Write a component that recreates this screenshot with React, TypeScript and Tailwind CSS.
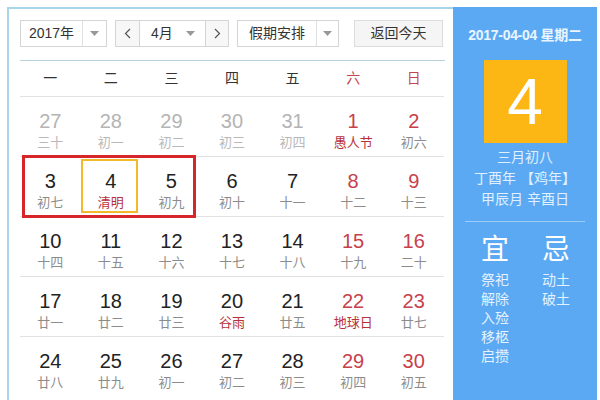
import React from 'react';

type Day = {
  n: number;
  lunar: string;
  muted?: boolean;
  red?: boolean;
  fest?: boolean;
};

const weeks: Day[][] = [
  [
    { n: 27, lunar: '三十', muted: true },
    { n: 28, lunar: '初一', muted: true },
    { n: 29, lunar: '初二', muted: true },
    { n: 30, lunar: '初三', muted: true },
    { n: 31, lunar: '初四', muted: true },
    { n: 1, lunar: '愚人节', red: true, fest: true },
    { n: 2, lunar: '初六', red: true },
  ],
  [
    { n: 3, lunar: '初七' },
    { n: 4, lunar: '清明', fest: true },
    { n: 5, lunar: '初九' },
    { n: 6, lunar: '初十' },
    { n: 7, lunar: '十一' },
    { n: 8, lunar: '十二', red: true },
    { n: 9, lunar: '十三', red: true },
  ],
  [
    { n: 10, lunar: '十四' },
    { n: 11, lunar: '十五' },
    { n: 12, lunar: '十六' },
    { n: 13, lunar: '十七' },
    { n: 14, lunar: '十八' },
    { n: 15, lunar: '十九', red: true },
    { n: 16, lunar: '二十', red: true },
  ],
  [
    { n: 17, lunar: '廿一' },
    { n: 18, lunar: '廿二' },
    { n: 19, lunar: '廿三' },
    { n: 20, lunar: '谷雨', fest: true },
    { n: 21, lunar: '廿五' },
    { n: 22, lunar: '地球日', red: true, fest: true },
    { n: 23, lunar: '廿七', red: true },
  ],
  [
    { n: 24, lunar: '廿八' },
    { n: 25, lunar: '廿九' },
    { n: 26, lunar: '初一' },
    { n: 27, lunar: '初二' },
    { n: 28, lunar: '初三' },
    { n: 29, lunar: '初四', red: true },
    { n: 30, lunar: '初五', red: true },
  ],
];

const weekdays = ['一', '二', '三', '四', '五', '六', '日'];

function Caret() {
  return (
    <svg width="9" height="5" viewBox="0 0 9 5">
      <path d="M0 0h9L4.5 5z" fill="#999" />
    </svg>
  );
}

function Chevron({ dir }: { dir: 'left' | 'right' }) {
  return (
    <svg width="7" height="11" viewBox="0 0 7 11">
      <path
        d={dir === 'left' ? 'M6 1L1.5 5.5 6 10' : 'M1 1l4.5 4.5L1 10'}
        fill="none"
        stroke="#555"
        strokeWidth="1.2"
      />
    </svg>
  );
}

function Cell({ d }: { d: Day }) {
  const num = d.muted ? 'text-[#b4b4b4]' : d.red ? 'text-[#c7414b]' : 'text-[#222]';
  const lunar = d.fest
    ? 'text-[#b8303a]'
    : d.muted
      ? 'text-[#b8b8b8]'
      : 'text-[#8c8c8c]';
  return (
    <div className="h-[60px] flex flex-col items-center pt-[13px] border-t border-[#e2e2e2]">
      <div className={`text-[20px] leading-[22px] ${num}`}>{d.n}</div>
      <div className={`text-[13px] leading-[16px] mt-[3px] ${lunar}`}>{d.lunar}</div>
    </div>
  );
}

export default function App() {
  return (
    <div
      className="w-[600px] h-[400px] bg-white overflow-hidden flex pt-[7px] pl-[7px]"
      style={{ fontFamily: '"Liberation Sans", "Noto Sans CJK SC", sans-serif' }}
    >
      <div className="w-[446px] h-[393px] border-l-2 border-t-2 border-[#a9d5ec] pl-[11px] pt-[11px]">
        {/* controls */}
        <div className="flex items-center h-[27px] text-[14px] text-[#333]">
          <div className="w-[87px] h-[27px] border border-[#d5d5d5] flex">
            <div className="w-[61px] flex items-center justify-center">2017年</div>
            <div className="flex-1 border-l border-[#e0e0e0] flex items-center justify-center">
              <Caret />
            </div>
          </div>
          <div className="ml-[8px] w-[114px] h-[27px] border border-[#d5d5d5] flex">
            <div className="w-[24px] bg-[#f7f7f7] flex items-center justify-center border-r border-[#d5d5d5]">
              <Chevron dir="left" />
            </div>
            <div className="flex-1 flex items-center pl-[11px] pr-[10px] justify-between">
              <span>4月</span>
              <Caret />
            </div>
            <div className="w-[23px] bg-[#f7f7f7] flex items-center justify-center border-l border-[#d5d5d5]">
              <Chevron dir="right" />
            </div>
          </div>
          <div className="ml-[8px] w-[102px] h-[27px] border border-[#d5d5d5] flex">
            <div className="w-[78px] flex items-center justify-center">假期安排</div>
            <div className="flex-1 border-l border-[#e0e0e0] flex items-center justify-center">
              <Caret />
            </div>
          </div>
          <div className="ml-[15px] w-[89px] h-[27px] border border-[#dcdcdc] bg-[#f5f5f5] flex items-center justify-center">
            返回今天
          </div>
        </div>

        <div className="mt-[13px] w-[425px] border-t border-[#b9d2df]" />

        {/* weekday header */}
        <div className="grid grid-cols-7 w-[424px] h-[35px] items-center text-[14px]">
          {weekdays.map((w, i) => (
            <div key={w} className={`text-center ${i >= 5 ? 'text-[#c4474f]' : 'text-[#333]'}`}>
              {w}
            </div>
          ))}
        </div>

        {/* days */}
        <div className="relative w-[424px] grid grid-cols-7">
          {weeks.flat().map((d, i) => (
            <Cell key={i} d={d} />
          ))}
          <div className="absolute left-[2px] top-[59px] w-[174px] h-[63px] border-[3px] border-[#d7262a]" />
          <div className="absolute left-[61px] top-[63px] w-[57px] h-[54px] border-2 border-[#f2b92a]" />
        </div>
      </div>

      {/* side panel */}
      <div className="w-[144px] h-[393px] bg-[#5ba9f3] flex flex-col items-center text-white">
        <div className="mt-[19px] text-[14px] leading-[18px] font-bold text-[#eaf5ff] tracking-[-0.3px]">
          2017-04-04 星期二
        </div>
        <div className="mt-[16px] w-[83px] h-[83px] bg-[#fdb714] flex items-center justify-center text-[64px] leading-none">
          4
        </div>
        <div className="mt-[4px] text-[14px] leading-[21px] text-[#e0f0ff] text-center">
          <div>三月初八</div>
          <div>丁酉年 【鸡年】</div>
          <div>甲辰月 辛酉日</div>
        </div>
        <div className="mt-[11px] w-[120px] border-t border-[#9ccbf7]" />
        <div className="mt-[12px] w-full flex pl-[27px] gap-[31px]">
          <div className="w-[30px] flex flex-col items-center">
            <div className="text-[28px] leading-[32px]">宜</div>
            <div className="mt-[5px] text-[14px] leading-[19px] text-[#e4f1ff]">
              <div>祭祀</div>
              <div>解除</div>
              <div>入殓</div>
              <div>移柩</div>
              <div>启攒</div>
            </div>
          </div>
          <div className="w-[30px] flex flex-col items-center">
            <div className="text-[28px] leading-[32px]">忌</div>
            <div className="mt-[5px] text-[14px] leading-[19px] text-[#e4f1ff]">
              <div>动土</div>
              <div>破土</div>
            </div>
          </div>
        </div>
      </div>
    </div>
  );
}
